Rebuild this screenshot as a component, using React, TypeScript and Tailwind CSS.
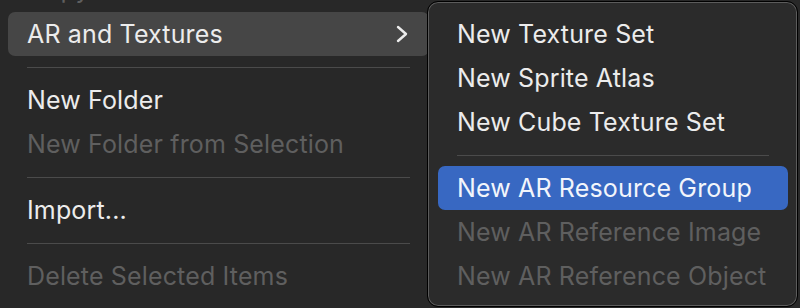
import React from "react";

type Item = { label: string; disabled?: boolean; active?: boolean; submenu?: boolean } | "sep";

const mainItems: Item[] = [
  { label: "AR and Textures", active: true, submenu: true },
  "sep",
  { label: "New Folder" },
  { label: "New Folder from Selection", disabled: true },
  "sep",
  { label: "Import..." },
  "sep",
  { label: "Delete Selected Items", disabled: true },
];

const subItems: Item[] = [
  { label: "New Texture Set" },
  { label: "New Sprite Atlas" },
  { label: "New Cube Texture Set" },
  "sep",
  { label: "New AR Resource Group", active: true },
  { label: "New AR Reference Image", disabled: true },
  { label: "New AR Reference Object", disabled: true },
];

function Chevron() {
  return (
    <svg width="14" height="18" viewBox="0 0 14 18" className="shrink-0">
      <polyline points="3,2 11,9 3,16" fill="none" stroke="#ececec" strokeWidth="2.4" strokeLinecap="round" strokeLinejoin="round" />
    </svg>
  );
}

function MenuRows({ items, blue }: { items: Item[]; blue?: boolean }) {
  return (
    <>
      {items.map((item, i) =>
        item === "sep" ? (
          <div key={i} className="h-[22px] flex items-center px-[19px]">
            <div className="h-px w-full bg-[#4b4b4b]" />
          </div>
        ) : (
          <div
            key={i}
            className={`h-[44px] flex items-center justify-between pl-[19px] pr-[20px] rounded-[7px] ${
              item.active ? (blue ? "bg-[#3868c2] text-[#f2f5fb]" : "bg-[#464646] text-[#ececec]") : ""
            } ${item.disabled ? "text-[#5f5f5f]" : item.active ? "" : "text-[#ececec]"}`}
          >
            <span className="whitespace-nowrap pt-px">{item.label}</span>
            {item.submenu && <Chevron />}
          </div>
        )
      )}
    </>
  );
}

export default function App() {
  return (
    <div
      className="w-[800px] h-[308px] bg-[#282828] flex overflow-hidden text-[25px] leading-none tracking-[0.15px]"
      style={{ fontFamily: "Inter, 'Noto Sans', sans-serif" }}
    >
      <div className="w-[437px] shrink-0 px-2 pt-3 relative">
        <div className="absolute left-[27px] top-[-33px] h-[44px] flex items-center text-[#5f5f5f]">Copy</div>
        <MenuRows items={mainItems} />
      </div>
      <div className="relative z-10 -ml-[10px] mt-px w-[371px] h-[306px] shrink-0 rounded-[11px] border border-black bg-[#2b2b2b] shadow-[inset_0_0_0_1px_#5c5c5c] pl-[10px] pr-[9px] pt-[10px]">
        <MenuRows items={subItems} blue />
      </div>
    </div>
  );
}
